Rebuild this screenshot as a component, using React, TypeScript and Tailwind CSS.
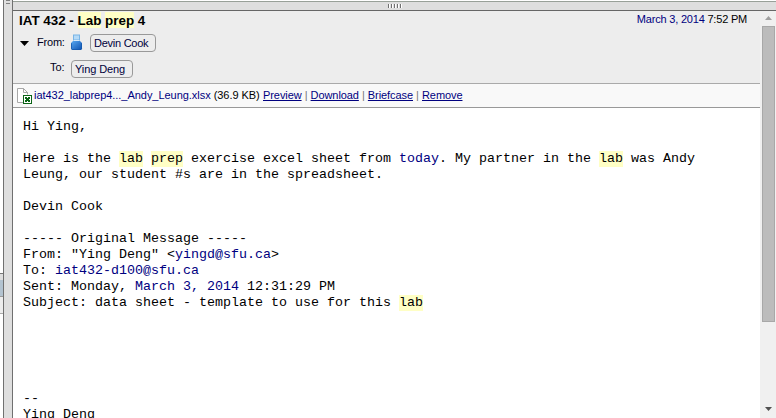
import type { ReactNode } from "react";

const Mark = ({ children }: { children: ReactNode }) => (
  <span className="inline-block h-4 bg-[#ffffc5] align-top">{children}</span>
);

const Obj = ({ children }: { children: ReactNode }) => (
  <span className="text-[#00007f]">{children}</span>
);

const Bubble = ({ children, className }: { children: ReactNode; className: string }) => (
  <span
    className={`box-border flex h-[18px] items-center whitespace-nowrap rounded-[4px] border border-[#999] pl-[3px] text-[#00003c] ${className}`}
  >
    {children}
  </span>
);

const PersonIcon = () => (
  <svg width="12" height="16" viewBox="0 0 12 16" className="-mt-[2px] shrink-0">
    <defs>
      <linearGradient id="body" x1="0" x2="1" y1="0" y2="1">
        <stop offset="0" stopColor="#5aaaf2" />
        <stop offset="1" stopColor="#0b4fae" />
      </linearGradient>
    </defs>
    <path d="M0 9 2 7h7l2 2v6l-1 1H1l-1-1z" fill="url(#body)" />
    <path d="M.5 9.3v5.4l.8.8h8.4l.8-.8V9.3" fill="none" stroke="#1458ac" strokeWidth=".8" />
    <rect x="2.5" y="1" width="6" height="5" fill="#b5daf7" stroke="#78b4e6" />
    <path d="M3 6.5h5" stroke="#d8ecfc" />
  </svg>
);

const SheetIcon = () => (
  <svg width="16" height="16" viewBox="0 0 16 16" className="shrink-0">
    <path d="M.5.5h6l4 4v10H.5z" fill="#fff" />
    <path d="M6.5.5h-6v14H6M6.5.5v4h4zl4 4v2" fill="none" stroke="#a8a8a8" />
    <g shapeRendering="crispEdges">
      <rect x="6.5" y="7.5" width="8" height="8" fill="#fff" stroke="#0b6416" />
      <path d="M8 9h2v1H8zM11 9h2v1h-2zM8 10h5v1H8zM9 11h3v1H9zM8 12h5v1H8zM8 13h2v1H8zM11 13h2v1h-2z" fill="#0b6416" />
    </g>
  </svg>
);

const body: ReactNode[] = [
  "Hi Ying,",
  "",
  <>Here is the <Mark>lab</Mark> <Mark>prep</Mark> exercise excel sheet from <Obj>today</Obj>. My partner in the <Mark>lab</Mark> was Andy</>,
  "Leung, our student #s are in the spreadsheet.",
  "",
  "Devin Cook",
  "",
  "----- Original Message -----",
  <>From: "Ying Deng" &lt;<Obj>yingd@sfu.ca</Obj>&gt;</>,
  <>To: <Obj>iat432-d100@sfu.ca</Obj></>,
  <>Sent: Monday, <Obj>March 3, 2014</Obj> 12:31:29 PM</>,
  <>Subject: data sheet - template to use for this <Mark>lab</Mark></>,
  "",
  "",
  "",
  "",
  "",
  "--",
  "Ying Deng",
];

const actions = ["Preview", "Download", "Briefcase", "Remove"];

export default function App() {
  return (
    <div className="flex h-[418px] w-[776px] overflow-hidden bg-white font-['Liberation_Sans',Arial,sans-serif] text-[11px] text-black">
      <div className="flex w-[3px] shrink-0 flex-col">
        <div className="h-[274px] border-b border-[#777]" />
        <div className="h-[6px] bg-[#dedede]" />
        <div className="h-[17px] border-b border-[#999] bg-[#b3c3d0]" />
        <div className="h-[17px] border-b border-[#aaa] bg-[#ededed]" />
      </div>
      <div className="flex w-[10px] shrink-0 flex-col items-center border-x border-[#707070] bg-[#dedede]">
        <div className="flex flex-col gap-[2px]">
          <div className="h-px w-1 bg-[#808080]" />
          <div className="h-px w-1 bg-[#808080]" />
        </div>
      </div>
      <div className="flex min-w-0 flex-1 flex-col">
        <div className="mt-px flex h-[10px] shrink-0 items-center border-b border-t border-b-[#666] border-t-[#98a098] bg-[#dedede] pl-[375px]">
          <div className="flex gap-px">
            {[0, 1, 2, 3, 4].map((i) => (
              <div key={i} className="h-1 w-[2px] border-r border-white bg-[#707070]" />
            ))}
          </div>
        </div>
        <div className="flex min-h-0 flex-1">
          <div className="flex w-[747px] shrink-0 flex-col">
            <div className="h-[73px] shrink-0 border-b border-[#aaa] bg-[#ededed]">
              <div className="flex h-[19px] justify-between pl-[6px] pr-[13px]">
                <div className="whitespace-pre pt-[1px] text-[13.4px] font-bold leading-[17px]">
                  IAT 432 - <Mark>Lab</Mark> <Mark>prep</Mark> 4
                </div>
                <div className="pt-px text-[11px] leading-[15px] tracking-[-0.2px]">
                  <Obj>March 3, 2014</Obj> 7:52 PM
                </div>
              </div>
              <div className="mt-[3px] flex h-5 items-center pl-[7px] text-[#000020]">
                <svg width="9" height="5" viewBox="0 0 9 5"><path d="M0 0h9L4.5 5z" /></svg>
                <span className="ml-2 w-[34px] pb-px tracking-[-0.2px]">From:</span>
                <PersonIcon />
                <Bubble className="ml-[7px] w-[66px] tracking-[-0.25px]">Devin Cook</Bubble>
              </div>
              <div className="mt-[6px] flex h-5 items-center pl-[37px] text-[#000020]">
                <span className="w-[21px] pb-[3px]">To:</span>
                <Bubble className="w-[62px] pt-px tracking-[-0.1px]">Ying Deng</Bubble>
              </div>
            </div>
            <div className="flex h-6 shrink-0 items-center whitespace-nowrap border-b border-[#999] bg-[#f9f9f9] pl-1">
              <SheetIcon />
              <span className="ml-px w-[226px] tracking-[-0.04px]"><Obj>iat432_labprep4..._Andy_Leung.xlsx</Obj> (36.9 KB)</span>
              <div className="ml-[3px] flex">
                {actions.map((a, i) => (
                  <div key={a} className="flex">
                    {i > 0 && <span className="w-[9px] text-center text-[#777]">|</span>}
                    <a className="text-[#00007f] tracking-[-0.08px] underline decoration-1 underline-offset-1">{a}</a>
                  </div>
                ))}
              </div>
            </div>
            <div className="min-h-0 flex-1 overflow-hidden bg-white pl-[10px] pt-[11px] font-['Liberation_Mono','Courier_New',monospace] text-[13.33px] leading-4">
              {body.map((line, i) => (
                <div key={i} className="h-4 whitespace-pre">{line}</div>
              ))}
            </div>
          </div>
          <div className="flex w-4 shrink-0 flex-col items-center bg-[#f0f0f0]">
            <svg width="7" height="4" viewBox="0 0 7 4" className="mt-[5px]"><path d="M0 4h7L3.5 0z" fill="#a0a0a0" /></svg>
            <div className="mt-[6px] h-[296px] w-[13px] border border-[#a8a8a8] bg-[#bcbcbc]" />
            <svg width="7" height="4" viewBox="0 0 7 4" className="mb-[7px] mt-auto"><path d="M0 0h7L3.5 4z" fill="#505050" /></svg>
          </div>
        </div>
      </div>
    </div>
  );
}
